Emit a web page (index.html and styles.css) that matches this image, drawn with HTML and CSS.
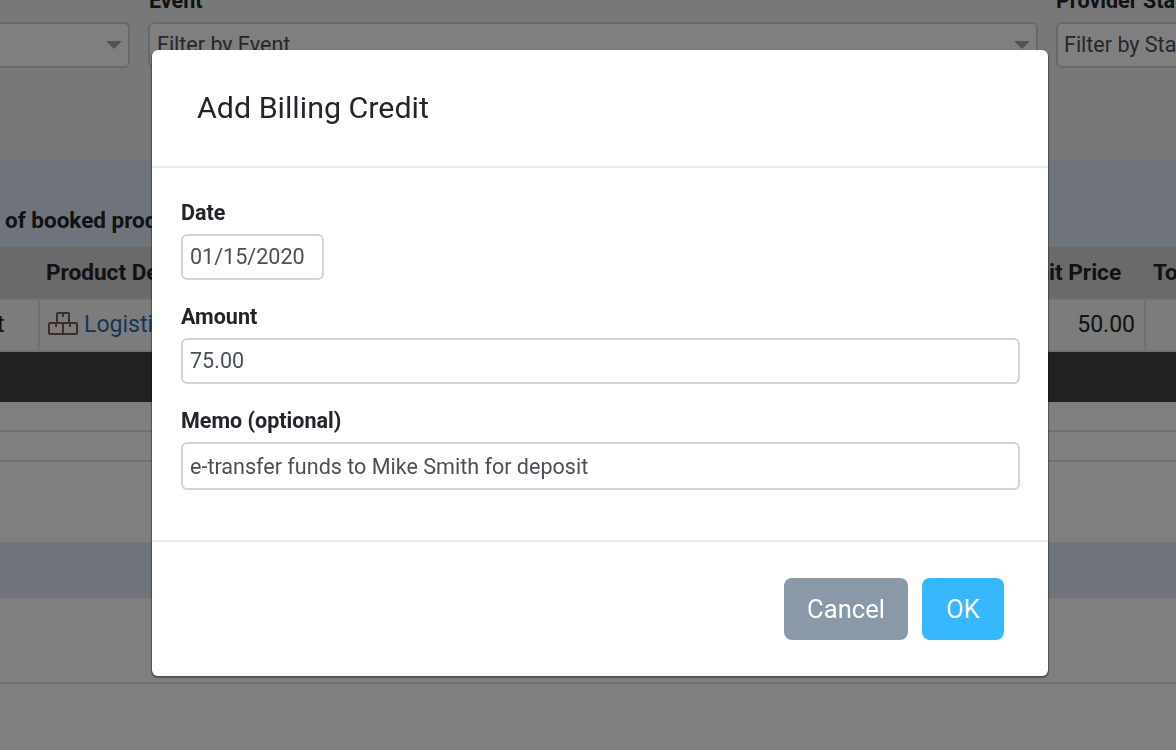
FILE: index.html
```html
<!DOCTYPE html>
<html lang="en">
<head>
<meta charset="utf-8">
<title>Add Billing Credit</title>
<link rel="stylesheet" href="styles.css">
</head>
<body>
<div class="page">
  <section class="filters">
    <div class="filter filter-a">
      <div class="filter-label">&nbsp;</div>
      <div class="select"><span class="caret"></span></div>
    </div>
    <div class="filter filter-b">
      <div class="filter-label">Event</div>
      <div class="select"><span>Filter by Event</span><span class="caret"></span></div>
    </div>
    <div class="filter filter-c">
      <div class="filter-label">Provider Status</div>
      <div class="select"><span>Filter by Status</span></div>
    </div>
  </section>
  <section class="summary"><div class="summary-text">Total of booked products</div></section>
  <div class="table-head">
    <div class="th th-product">Product Description</div>
    <div class="th th-price">Unit Price</div>
    <div class="th th-total">Total</div>
  </div>
  <div class="table-row">
    <div class="td td-first">t</div>
    <div class="td td-product">
      <svg class="box-icon" width="30" height="24" viewBox="0 0 30 24" fill="none" stroke="#7e5c4f" stroke-width="2" aria-hidden="true">
        <path d="M9 11V2a1 1 0 0 1 1-1h10a1 1 0 0 1 1 1v9"/>
        <path d="M1 12a1 1 0 0 1 1-1h26a1 1 0 0 1 1 1v9a1 1 0 0 1-1 1H2a1 1 0 0 1-1-1z"/>
        <path d="M15 11v11M15 1v4M8 11v4M22 11v4"/>
      </svg>
      <a class="link">Logistics</a>
    </div>
    <div class="td td-price">50.00</div>
    <div class="td td-total"></div>
  </div>
  <div class="dark-bar"></div>
  <div class="line-row"></div>
  <div class="line-row"></div>
  <div class="spacer-a"></div>
  <div class="band"></div>
  <div class="spacer-b"></div>
</div>

<div class="backdrop"></div>

<div class="modal" role="dialog" aria-label="Add Billing Credit">
  <header class="modal-header"><h2 class="modal-title">Add Billing Credit</h2></header>
  <div class="modal-body">
    <div class="field">
      <label class="field-label" for="date">Date</label>
      <input class="input input-date" id="date" value="01/15/2020">
    </div>
    <div class="field">
      <label class="field-label" for="amount">Amount</label>
      <input class="input" id="amount" value="75.00">
    </div>
    <div class="field">
      <label class="field-label" for="memo">Memo (optional)</label>
      <input class="input input-memo" id="memo" value="e-transfer funds to Mike Smith for deposit">
    </div>
  </div>
  <footer class="modal-footer">
    <button class="btn btn-cancel">Cancel</button>
    <button class="btn btn-ok">OK</button>
  </footer>
</div>
</body>
</html>
```

FILE: styles.css
```css
* { box-sizing: border-box; }
html, body { margin: 0; height: 100%; overflow: hidden; }
body { font-family: Roboto, "Liberation Sans", sans-serif; color: #212529; background: #fff; }

.page { height: 750px; overflow: hidden; background: #fff; }

.filters { height: 159px; display: flex; align-items: flex-start; background: #f0f0f0; }
.filter { flex: none; margin-top: -10px; }
.filter-a { width: 130px; margin-right: 18px; }
.filter-b { width: 890px; margin-right: 18px; }
.filter-c { width: 200px; }
.filter-label { font-size: 21.5px; font-weight: 700; line-height: 22px; height: 32px; padding-left: 1px; white-space: nowrap; color: #212529; }
.filter-c .filter-label { padding-left: 0; }
.select { height: 46px; border: 2px solid #ced4da; border-radius: 6px; background: #fff; display: flex; align-items: center; justify-content: space-between; padding: 0 6px 2px 7px; font-size: 21.5px; color: #495057; white-space: nowrap; overflow: hidden; }
.filter-a .select { border-left: 0; border-radius: 0 6px 6px 0; justify-content: flex-end; }
.filter-c .select { padding-left: 6px; }
.caret { width: 0; height: 0; border-left: 8px solid transparent; border-right: 8px solid transparent; border-top: 8px solid #a6a6a6; flex: none; margin-top: 2px; }

.summary { height: 88px; background: #dfe8f8; border-top: 3px solid #e6e6e6; }
.summary-text { font-size: 22.5px; font-weight: 700; white-space: nowrap; margin: 46px 0 0 -51px; line-height: 24px; }

.table-head { height: 51px; background: #d4d4d4; display: flex; align-items: flex-start; padding-top: 14px; }
.th { font-size: 22.6px; font-weight: 700; line-height: 24px; white-space: nowrap; flex: none; }
.th-product { margin-left: 46px; width: 975.5px; }
.th-price { width: 131.5px; }

.table-row { height: 54px; background: #f8f8f8; display: flex; border-bottom: 2px solid #e6e6e6; }
.td { font-size: 23px; display: flex; align-items: center; border-right: 2px solid #e0e0e0; border-top: 2px solid #e0e0e0; padding-bottom: 1px; flex: none; }
.td-first { width: 40px; text-indent: -3px; }
.td-product { width: 1000px; padding-left: 8px; gap: 6px; }
.td-price { width: 106px; justify-content: flex-end; padding-right: 9px; }
.td-total { flex: 1; border-right: 0; }
.box-icon { flex: none; margin-top: -2px; }
.link { color: #2c6cb0; white-space: nowrap; }

.dark-bar { height: 50px; background: #444; }
.line-row { height: 30px; background: #fff; border-bottom: 2px solid #e0e0e0; }
.spacer-a { height: 80px; background: #fff; }
.band { height: 56px; background: #dfe8f8; border-top: 2px solid #e6e6e6; border-bottom: 2px solid #e6e6e6; }
.spacer-b { height: 86px; background: #fff; border-bottom: 2px solid #e0e0e0; }

.backdrop { position: fixed; inset: 0; background: rgba(0, 0, 0, .5); }

.modal { position: fixed; left: 152px; top: 50px; width: 896px; height: 626px; background: #fff; border-radius: 6px; box-shadow: 0 1px 1px 1px rgba(0, 0, 0, .35); display: flex; flex-direction: column; }
.modal-header { height: 118px; padding: 0 45px; border-bottom: 2px solid #e9ecef; display: flex; align-items: center; flex: none; }
.modal-title { margin: 0; font-size: 30.4px; font-weight: 400; line-height: 1.2; color: #212529; }
.modal-body { flex: 1; padding: 30px 28px 0 29px; display: flex; flex-direction: column; gap: 22px; }
.field { display: flex; flex-direction: column; gap: 6px; }
.field-label { font-size: 21.5px; font-weight: 700; line-height: 30px; height: 30px; color: #212529; }
.input { height: 46px; width: 100%; border: 2px solid #ced4da; border-radius: 6px; padding: 0 7px 2px; font: 400 21.55px Roboto, "Liberation Sans", sans-serif; color: #495057; background: #fff; outline: 0; }
.input-date { width: 143px; }
.input-memo { height: 48px; padding-bottom: 0; }
.modal-footer { height: 136px; flex: none; border-top: 2px solid #e9ecef; display: flex; justify-content: flex-end; align-items: flex-start; padding: 36px 44px 0 0; gap: 14px; }
.btn { height: 62px; border: 0; border-radius: 8px; color: #fff; font: 400 25.6px Roboto, "Liberation Sans", sans-serif; padding: 0; }
.btn-cancel { width: 124px; background: #8a99a8; }
.btn-ok { width: 82px; background: #36b7ff; }
```
